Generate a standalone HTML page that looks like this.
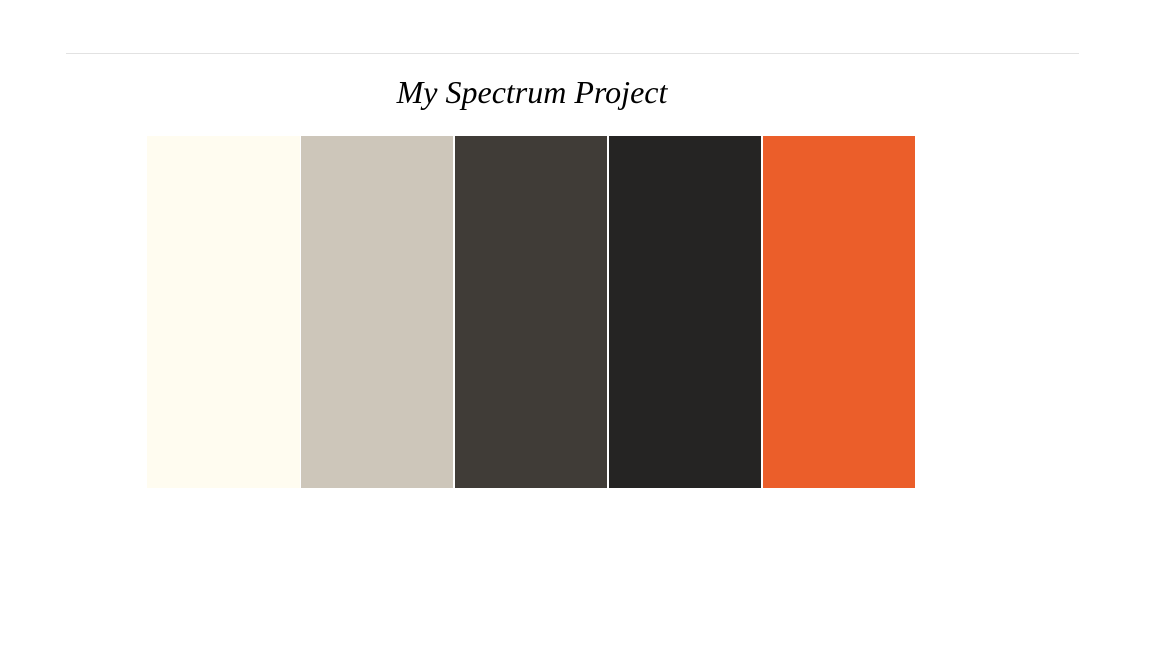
<!DOCTYPE html>
<html><head><meta charset="utf-8"><style>
html,body{margin:0;padding:0;background:#fff;width:1152px;height:648px;overflow:hidden;position:relative}
.line{position:absolute;left:66px;top:53px;width:1013px;height:1px;background:#e2e2e2}
h1{position:absolute;left:0;width:1064px;top:74px;margin:0;text-align:center;font:italic 32px "Liberation Serif",serif;font-weight:normal;color:#000}
.s{position:absolute;top:136px;height:352px}
</style></head><body>
<div class="line"></div>
<h1>My Spectrum Project</h1>
<div class="s" style="left:147px;width:153px;background:#fffcf0"></div>
<div class="s" style="left:301px;width:152px;background:#cdc6ba"></div>
<div class="s" style="left:455px;width:152px;background:#403c37"></div>
<div class="s" style="left:609px;width:152px;background:#252423"></div>
<div class="s" style="left:763px;width:152px;background:#eb5e2a"></div>
</body></html>
